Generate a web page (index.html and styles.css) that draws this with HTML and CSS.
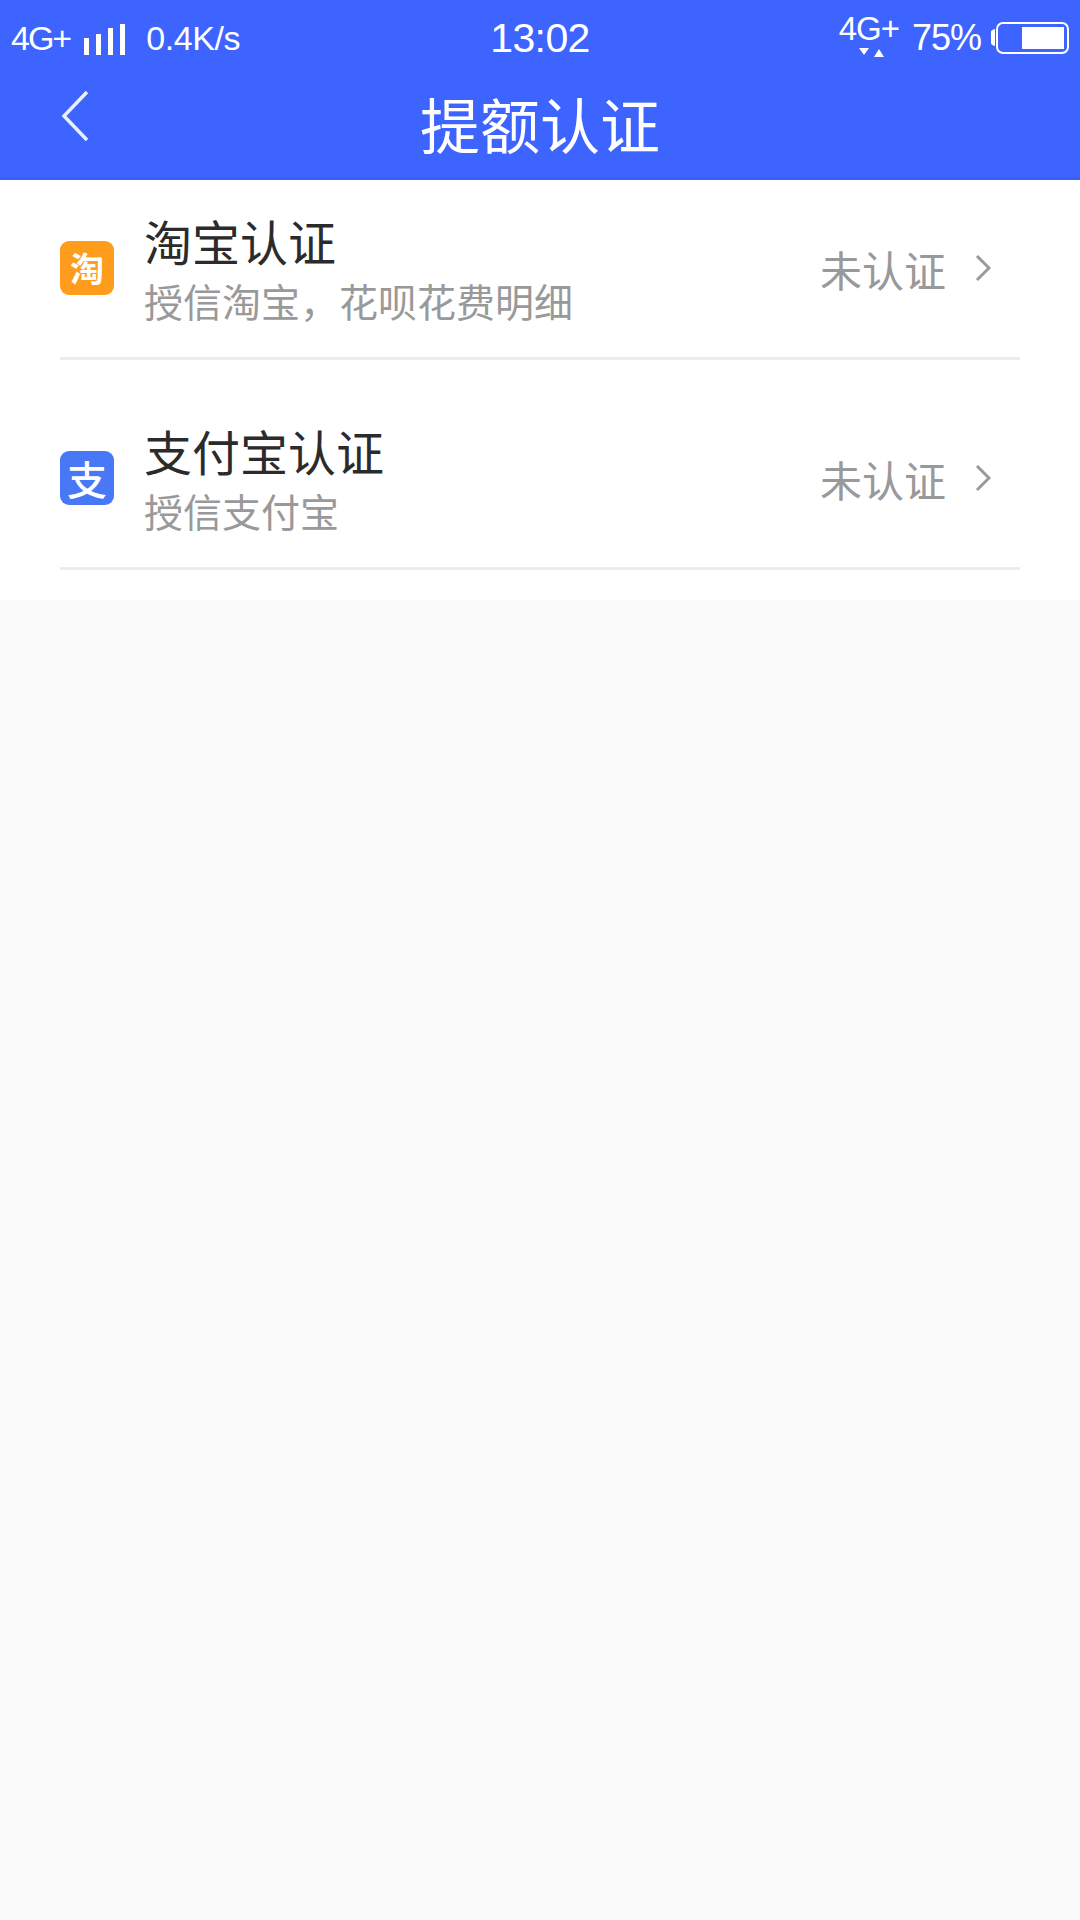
FILE: index.html
```html
<!DOCTYPE html>
<html lang="zh-CN">
<head>
<meta charset="utf-8">
<title>提额认证</title>
<link rel="stylesheet" href="styles.css">
</head>
<body>
<header class="header">
  <div class="status">
    <div class="status-left">
      <span class="net">4G+</span>
      <svg class="signal" width="41" height="31" viewBox="0 0 41 31"><path fill="#fff" d="M0 14h5v17H0zM12 10h5v21h-5zM24 4h5v27h-5zM36 0h5v31h-5z"/></svg>
      <span class="speed">0.4K/s</span>
    </div>
    <div class="time">13:02</div>
    <div class="status-right">
      <span class="net-wrap"><span class="net2">4G+</span>
        <svg class="arrows" width="25" height="10" viewBox="0 0 25 10"><path fill="#fff" d="M0 0h10L5 7zM15 9h10L20 1z"/></svg>
      </span>
      <span class="pct">75%</span>
      <svg class="battery" width="78" height="32" viewBox="0 0 78 32"><path fill="#fff" d="M0 10q0-2 4-3v17q-4-1-4-3z"/><rect x="6" y="1" width="71" height="30" rx="6" fill="none" stroke="#fff" stroke-width="2"/><rect x="31" y="5" width="42" height="22" fill="#fff"/></svg>
    </div>
  </div>
  <div class="nav">
    <svg class="back" width="30" height="52" viewBox="0 0 30 52"><path d="M26 2 3 26l23 24" fill="none" stroke="#e8f0fa" stroke-width="3.500"/></svg>
    <h1 class="title">提额认证</h1>
  </div>
</header>
<main class="list">
  <section class="row">
    <span class="icon icon-taobao">淘</span>
    <div class="texts">
      <div class="row-title">淘宝认证</div>
      <div class="row-sub">授信淘宝，花呗花费明细</div>
    </div>
    <span class="state">未认证</span>
    <svg class="chev" width="16" height="28" viewBox="0 0 16 28"><path d="M2 2l12 12L2 26" fill="none" stroke="#999" stroke-width="3"/></svg>
  </section>
  <section class="row">
    <span class="icon icon-alipay">支</span>
    <div class="texts">
      <div class="row-title">支付宝认证</div>
      <div class="row-sub">授信支付宝</div>
    </div>
    <span class="state">未认证</span>
    <svg class="chev" width="16" height="28" viewBox="0 0 16 28"><path d="M2 2l12 12L2 26" fill="none" stroke="#999" stroke-width="3"/></svg>
  </section>
</main>
</body>
</html>
```
FILE: styles.css
```css
* { box-sizing: border-box; }
html, body { margin: 0; padding: 0; }
body {
  width: 1080px;
  height: 1920px;
  background: #fafafa;
  font-family: "Noto Sans CJK SC", "Liberation Sans", sans-serif;
  overflow: hidden;
}
.header {
  height: 180px;
  background: #3e64ff;
  border-bottom: 3px solid #3a5ef0;
  color: #fff;
}
.status {
  height: 76px;
  display: grid;
  grid-template-columns: 1fr auto 1fr;
  align-items: center;
  padding: 0 11px;
  font-family: "Liberation Sans", Arial, sans-serif;
}
.status-left { display: flex; align-items: center; }
.net { font-size: 34px; letter-spacing: -2px; }
.signal { margin-left: 14px; margin-top: 3px; }
.speed { font-size: 34px; letter-spacing: -0.400px; margin-left: 21px; }
.time { font-size: 41px; letter-spacing: -0.600px; margin-top: 1px; }
.status-right { display: flex; align-items: center; justify-content: flex-end; }
.net-wrap { display: flex; flex-direction: column; align-items: center; height: 52px; margin-top: -2px; }
.net2 { font-size: 33px; line-height: 36px; letter-spacing: -1px; }
.arrows { margin-top: 1px; margin-left: 6px; }
.pct { font-size: 36px; margin-left: 13px; letter-spacing: -1px; }
.battery { margin-left: 10px; }
.nav {
  height: 101px;
  position: relative;
  display: flex;
  align-items: center;
  justify-content: center;
}
.back { position: absolute; left: 61px; top: 14px; }
.title {
  margin: 0;
  font-size: 60px;
  font-weight: 400;
  line-height: 80px;
  padding-bottom: 8px;
}
.list {
  background: #fff;
  height: 420px;
  display: flex;
  flex-direction: column;
  gap: 30px;
  padding: 0 60px;
}
.row {
  height: 180px;
  display: flex;
  align-items: center;
  border-bottom: 3px solid #ececec;
  padding-bottom: 2px;
  padding-right: 29px;
}
.icon {
  width: 54px;
  height: 54px;
  border-radius: 9px;
  display: flex;
  align-items: center;
  justify-content: center;
  color: #fff;
  font-weight: 700;
  font-size: 34px;
  line-height: 1;
}
.icon-taobao { background: #ff9c1b; }
.icon-alipay { background: #4878f5; font-size: 40px; font-weight: 500; }
.texts { margin-left: 30px; flex: 1; padding-top: 4px; }
.row-title { font-size: 48px; line-height: 58px; color: #2b2b2b; }
.row-sub { font-size: 39px; line-height: 56px; margin-top: 3px; color: #999; }
.state { font-size: 42px; color: #999; margin-top: 2px; }
.chev { margin-left: 29px; }
```
